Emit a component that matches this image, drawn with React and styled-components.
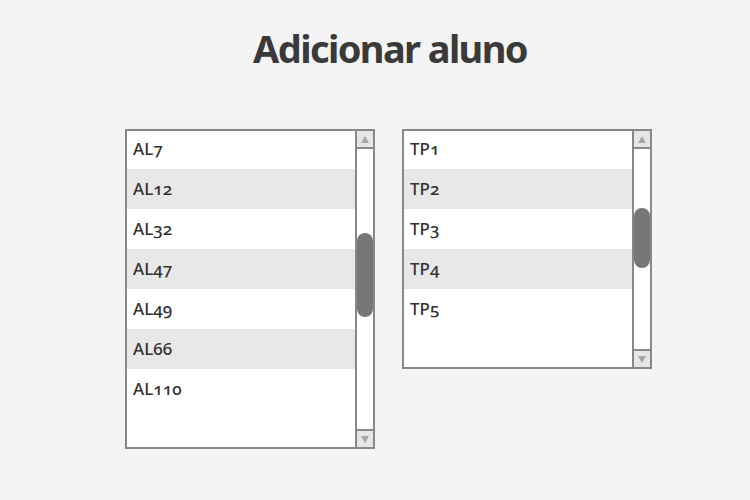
import React from 'react'
import styled, { createGlobalStyle } from 'styled-components'

const GlobalStyle = createGlobalStyle`
  html, body {
    margin: 0;
    padding: 0;
    background: #f4f4f4;
  }
  body {
    font-family: 'Noto Sans', 'Open Sans', sans-serif;
    color: #333;
  }
`

const Page = styled.div`
  width: 750px;
  height: 500px;
  padding-top: 24px;
  box-sizing: border-box;
  display: flex;
  flex-direction: column;
  align-items: center;
`

const Title = styled.h1`
  margin: 0;
  padding-left: 30px;
  height: 48px;
  line-height: 48px;
  font-size: 38px;
  font-weight: 700;
  color: #3a3a3a;
  letter-spacing: -1.6px;
`

const Lists = styled.div`
  margin-top: 57px;
  padding-left: 27px;
  display: flex;
  align-items: flex-start;
  gap: 27px;
`

const ListBox = styled.div`
  width: 250px;
  height: ${(p) => p.rows * 40}px;
  display: flex;
  background: #fff;
  outline: 2px solid #888;
  outline-offset: -2px;
  overflow: hidden;
`

const Items = styled.ul`
  flex: 1;
  margin: 0;
  padding: 0;
  list-style: none;
`

const Item = styled.li`
  height: 40px;
  line-height: 39px;
  padding-left: 8px;
  font-size: 17px;
  font-weight: 500;
  font-variant-numeric: oldstyle-nums;
  font-feature-settings: 'onum' 1;
  background: ${(p) => (p.striped ? '#e8e8e8' : '#fff')};
`

const Scrollbar = styled.div`
  width: 16px;
  padding: 2px 2px 2px 0;
  border-left: 2px solid #888;
  display: flex;
  flex-direction: column;
`

const Arrow = styled.div`
  height: 16px;
  flex: none;
  background: #e6e6e6;
  display: flex;
  align-items: center;
  justify-content: center;
  border-${(p) => (p.down ? 'top' : 'bottom')}: 2px solid #888;
  &::after {
    content: '';
    width: 0;
    height: 0;
    border-left: 4px solid transparent;
    border-right: 4px solid transparent;
    border-${(p) => (p.down ? 'top' : 'bottom')}: 7px solid #a6a6a6;
  }
`

const Track = styled.div`
  flex: 1;
  background: #fff;
`

const Thumb = styled.div`
  width: 16px;
  border-radius: 8px;
  background: #777;
`

const alunos = ['AL7', 'AL12', 'AL32', 'AL47', 'AL49', 'AL66', 'AL110']
const turmas = ['TP1', 'TP2', 'TP3', 'TP4', 'TP5']

const SelectList = ({ items, rows, thumbTop, thumbHeight }) => (
  <ListBox rows={rows}>
    <Items>
      {items.map((it, i) => (
        <Item key={it} striped={i % 2 === 1}>
          {it}
        </Item>
      ))}
    </Items>
    <Scrollbar>
      <Arrow />
      <Track>
        <Thumb style={{ marginTop: thumbTop, height: thumbHeight }} />
      </Track>
      <Arrow down />
    </Scrollbar>
  </ListBox>
)

const App = () => (
  <>
    <GlobalStyle />
    <Page>
      <Title>Adicionar aluno</Title>
      <Lists>
        <SelectList items={alunos} rows={8} thumbTop={84} thumbHeight={84} />
        <SelectList items={turmas} rows={6} thumbTop={59} thumbHeight={60} />
      </Lists>
    </Page>
  </>
)

export default App
